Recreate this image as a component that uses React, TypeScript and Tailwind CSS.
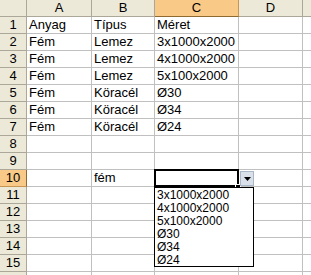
import React from "react";

const colW = ["w-[65px]", "w-[63px]", "w-[84px]", "w-[64px]", "w-[40px]"];
const colLabels = ["A", "B", "C", "D", "E"];

const data: string[][] = [
  ["Anyag", "Típus", "Méret", "", ""],
  ["Fém", "Lemez", "3x1000x2000", "", ""],
  ["Fém", "Lemez", "4x1000x2000", "", ""],
  ["Fém", "Lemez", "5x100x2000", "", ""],
  ["Fém", "Köracél", "Ø30", "", ""],
  ["Fém", "Köracél", "Ø34", "", ""],
  ["Fém", "Köracél", "Ø24", "", ""],
  ["", "", "", "", ""],
  ["", "", "", "", ""],
  ["", "fém", "", "", ""],
  ["", "", "", "", ""],
  ["", "", "", "", ""],
  ["", "", "", "", ""],
  ["", "", "", "", ""],
  ["", "", "", "", ""],
  ["", "", "", "", ""],
];

const listItems = ["3x1000x2000", "4x1000x2000", "5x100x2000", "Ø30", "Ø34", "Ø24"];

export default function App() {
  return (
    <div
      className="relative w-[311px] h-[275px] overflow-hidden bg-white text-black text-[13px] leading-[16px]"
      style={{ fontFamily: '"Liberation Sans", Arial, sans-serif' }}
    >
      {/* header row */}
      <div className="flex h-[17px] w-max">
        <div className="w-[27px] shrink-0 bg-[#ECE9D8] border-r border-b border-[#ACA899]" />
        {colLabels.map((l, i) => (
          <div
            key={l}
            className={`${colW[i]} shrink-0 flex items-center justify-center border-r border-b ${
              i === 2
                ? "bg-[#F8C987] border-[#C89650] border-b-[#8E6A30]"
                : "bg-[#ECE9D8] border-[#ACA899]"
            }`}
          >
            {l}
          </div>
        ))}
      </div>
      {data.map((row, r) => (
        <div key={r} className="flex h-[17px] w-max">
          <div
            className={`w-[27px] shrink-0 flex items-center justify-center border-r border-b ${
              r === 9
                ? "bg-[#F8C987] border-[#C89650] border-r-[#8E6A30]"
                : "bg-[#ECE9D8] border-[#ACA899]"
            }`}
          >
            {r + 1}
          </div>
          {row.map((c, i) => (
            <div
              key={i}
              className={`${colW[i]} shrink-0 border-r border-b border-[#C0C0C0] pl-[2px] whitespace-nowrap overflow-hidden`}
            >
              {c}
            </div>
          ))}
        </div>
      ))}

      {/* active cell C10 */}
      <div className="absolute left-[154px] top-[169px] w-[85px] h-[18px] border-2 border-black" />
      <div className="absolute left-[235px] top-[184px] w-[6px] h-[6px] bg-black border border-white" />

      {/* dropdown button */}
      <div className="absolute left-[240px] top-[171px] w-[14px] h-[15px] bg-[#D9E0EA] border border-[#A9B6C8] flex items-center justify-center">
        <svg width="7" height="4" viewBox="0 0 7 4">
          <polygon points="0,0 7,0 3.5,4" fill="#000" />
        </svg>
      </div>

      {/* dropdown list */}
      <div className="absolute left-[154px] top-[187px] w-[100px] h-[80px] bg-white border border-black pl-[2px] pt-[1px] text-[12px] leading-[13px]">
        {listItems.map((t) => (
          <div key={t} className="h-[13px] whitespace-nowrap">
            {t}
          </div>
        ))}
      </div>
    </div>
  );
}
